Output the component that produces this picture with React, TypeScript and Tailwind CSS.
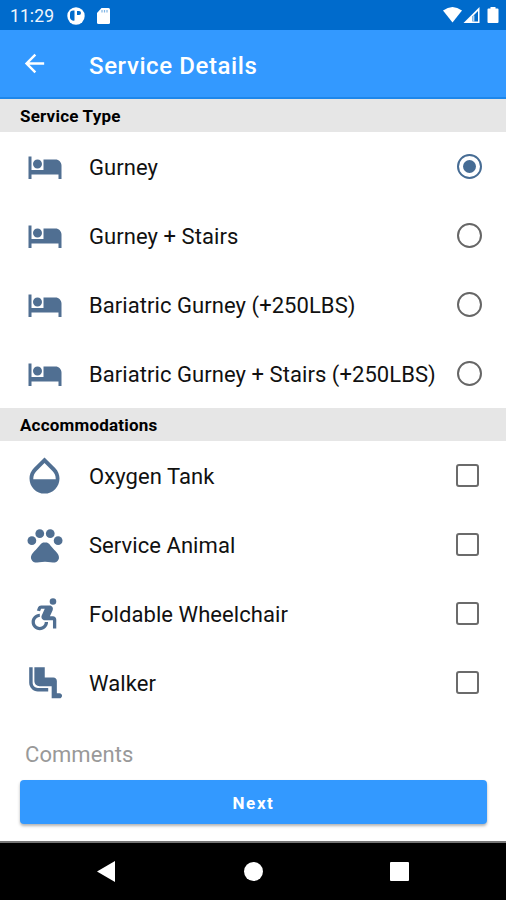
import { useState } from "react";
import {
  MdAccessibleForward,
  MdAirlineSeatLegroomNormal,
  MdArrowBack,
  MdHotel,
  MdOpacity,
  MdPets,
} from "react-icons/md";

const serviceTypes = ["Gurney", "Gurney + Stairs", "Bariatric Gurney (+250LBS)", "Bariatric Gurney + Stairs (+250LBS)"];

const accommodations = [
  { label: "Oxygen Tank", icon: <MdOpacity size={45} /> },
  { label: "Service Animal", icon: <MdPets size={42} /> },
  { label: "Foldable Wheelchair", icon: <MdAccessibleForward size={39.5} /> },
  { label: "Walker", icon: <MdAirlineSeatLegroomNormal size={41.5} /> },
];

function StatusBar() {
  return (
    <div className="flex h-[30px] items-center bg-[#006bcc] pl-[10px] pr-[7px] text-white">
      <span className="w-[57px] pt-[2px] text-[17.5px] tracking-[0.1px] text-[#f0f6fc]">11:29</span>
      <svg className="mt-px" width="18" height="18" viewBox="0 0 18 18">
        <circle cx="9" cy="9" r="8.7" fill="#fff" />
        <path d="M7.500 3.500H6.200A3.200 3.200 0 0 0 3 6.700v3.800a3.500 3.500 0 0 0 4.500 3z" fill="#006bcc" />
        <path d="M10 4h2a2 2 0 0 1 0 4h-2z" fill="#006bcc" />
      </svg>
      <svg className="ml-[12px] mt-px" width="13" height="16" viewBox="0 0 13 16">
        <path d="M4.5 0H11.5Q13 0 13 1.5V14.5Q13 16 11.5 16H1.5Q0 16 0 14.5V5Z" fill="#fff" />
        <path d="M5 2v2.500M7.500 2v2.500M10 2v2.500" stroke="#006bcc" strokeOpacity=".5" strokeWidth="1.2" />
      </svg>
      <div className="ml-auto flex items-center">
        <svg width="19" height="16" viewBox="0 0 19 16">
          <path d="M0 3.6Q9.500 -3.400 19 3.600L9.500 15.500Z" fill="#fff" />
        </svg>
        <svg className="ml-px" width="17" height="16" viewBox="0 0 17 16">
          <path d="M16.500 0V16H0.500Z" fill="#fff" />
          <path d="M15 4V14.500H9.500V9.500Z" fill="#006bcc" />
          <path d="M10.800 8.500V14.500" stroke="#fff" strokeWidth="1" />
        </svg>
        <svg className="ml-[7px]" width="12" height="16" viewBox="0 0 12 16">
          <path d="M3.500 0H8.500V1.500H10.500Q11.500 1.500 11.500 2.500V15Q11.500 16 10.500 16H1.500Q0.500 16 0.500 15V2.500Q0.500 1.500 1.500 1.500H3.500Z" fill="#fff" />
        </svg>
      </div>
    </div>
  );
}

function SectionTitle({ children }: { children: string }) {
  return (
    <h2 className="flex h-[33px] items-center bg-[#e6e6e6] pl-5 pt-[3px] text-[17px] font-bold tracking-[0.2px] text-black">
      {children}
    </h2>
  );
}

export default function App() {
  const [service, setService] = useState(0);
  const [checked, setChecked] = useState<string[]>([]);

  const toggle = (label: string) =>
    setChecked(checked.includes(label) ? checked.filter((c) => c !== label) : [...checked, label]);

  return (
    <div className="flex h-[900px] w-[506px] flex-col bg-white font-[Roboto,sans-serif]">
      <StatusBar />

      {/* App bar */}
      <header className="flex h-[69px] items-center border-b-2 border-[#1e87ea] bg-[#3399ff] text-white">
        <button className="ml-[20px] w-[69px]">
          <MdArrowBack size={29} />
        </button>
        <h1 className="pt-[5px] text-[24px] font-medium tracking-[0.6px]">Service Details</h1>
      </header>

      {/* Service type */}
      <SectionTitle>Service Type</SectionTitle>
      <div className="flex h-[276px] flex-col">
        {serviceTypes.map((label, i) => (
          <button key={label} className="flex flex-1 items-center text-left" onClick={() => setService(i)}>
            <span className="flex w-[89px] shrink-0 justify-center text-[#506f92]">
              <MdHotel size={36} />
            </span>
            <span className="whitespace-nowrap pt-px text-[22px] tracking-[0.06px] text-[#111]">{label}</span>
            <span
              className={
                "ml-auto mr-[24px] flex size-[25px] shrink-0 items-center justify-center rounded-full border-[2.5px] " +
                (service === i ? "border-[#466c94]" : "border-[#666]")
              }
            >
              {service === i && <span className="size-[13px] rounded-full bg-[#466c94]" />}
            </span>
          </button>
        ))}
      </div>

      {/* Accommodations */}
      <SectionTitle>Accommodations</SectionTitle>
      <div className="flex h-[276px] flex-col">
        {accommodations.map(({ label, icon }) => (
          <button key={label} className="flex flex-1 items-center text-left" onClick={() => toggle(label)}>
            <span className="flex w-[89px] shrink-0 justify-center text-[#506f92]">{icon}</span>
            <span className="whitespace-nowrap pt-px text-[22px] tracking-[0.06px] text-[#111]">{label}</span>
            <span
              className={
                "ml-auto mr-[27px] size-[23px] shrink-0 rounded-[3px] border-[2.5px] border-[#6b6b6b] " +
                (checked.includes(label) ? "bg-[#466c94]" : "")
              }
            />
          </button>
        ))}
      </div>

      {/* Comments */}
      <input
        className="mt-[18px] h-[38px] pl-[25px] text-[22px] tracking-[0.06px] outline-none placeholder:text-[#999]"
        placeholder="Comments"
      />
      <button className="mx-[20px] mt-[7px] h-[44px] w-[467px] rounded-[4px] bg-[#3399ff] pt-[3px] text-[17px] font-bold tracking-[1.6px] text-white shadow-[0_2px_3px_rgba(0,0,0,0.3)]">
        Next
      </button>

      {/* Android navigation */}
      <nav className="mt-auto flex h-[59px] items-center border-t-2 border-[#777] bg-black">
        <svg className="ml-[97px]" width="18" height="21" viewBox="0 0 18 21">
          <path d="M18 0V21L0 10.500Z" fill="#fff" />
        </svg>
        <span className="ml-[129px] size-[19px] rounded-full bg-white" />
        <span className="ml-[127px] size-[19px] rounded-[1px] bg-white" />
      </nav>
    </div>
  );
}
